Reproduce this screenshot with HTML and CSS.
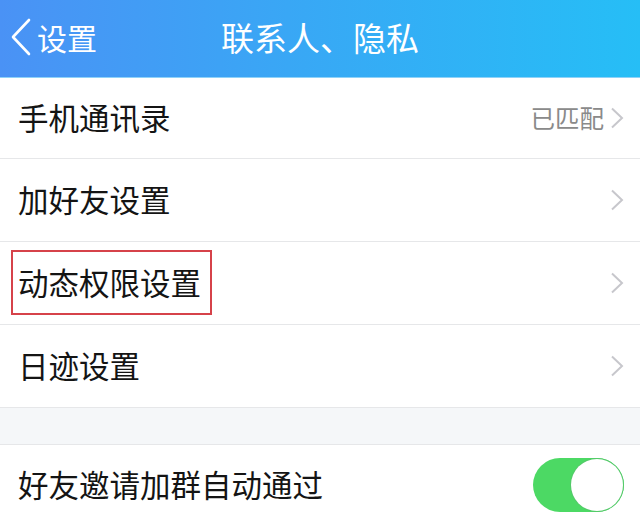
FILE: index.html
```html
<!DOCTYPE html>
<html lang="zh-CN">
<head>
<meta charset="utf-8">
<title>联系人、隐私</title>
<link rel="stylesheet" href="styles.css">
</head>
<body>
<div class="screen">
  <header class="nav">
    <div class="back">
      <svg class="back-icon" width="22" height="38" viewBox="0 0 22 38"><path d="M19 2 L3 19 L19 36" fill="none" stroke="#fff" stroke-width="2.6" stroke-linecap="round" stroke-linejoin="round"/></svg>
      <span class="back-text">设置</span>
    </div>
    <div class="title">联系人、隐私</div>
  </header>
  <ul class="group">
    <li class="row first">
      <span class="label">手机通讯录</span>
      <span class="right"><span class="value">已匹配</span><svg class="chev" width="14" height="22" viewBox="0 0 14 22"><path d="M2 1.5 L12 11 L2 20.5" fill="none" stroke="#c7c7cc" stroke-width="2"/></svg></span>
    </li>
    <li class="row">
      <span class="label">加好友设置</span>
      <span class="right"><svg class="chev" width="14" height="22" viewBox="0 0 14 22"><path d="M2 1.5 L12 11 L2 20.5" fill="none" stroke="#c7c7cc" stroke-width="2"/></svg></span>
    </li>
    <li class="row">
      <span class="label marked">动态权限设置</span>
      <span class="right"><svg class="chev" width="14" height="22" viewBox="0 0 14 22"><path d="M2 1.5 L12 11 L2 20.5" fill="none" stroke="#c7c7cc" stroke-width="2"/></svg></span>
    </li>
    <li class="row">
      <span class="label">日迹设置</span>
      <span class="right"><svg class="chev" width="14" height="22" viewBox="0 0 14 22"><path d="M2 1.5 L12 11 L2 20.5" fill="none" stroke="#c7c7cc" stroke-width="2"/></svg></span>
    </li>
  </ul>
  <div class="gap"></div>
  <ul class="group top">
    <li class="row last">
      <span class="label">好友邀请加群自动通过</span>
      <span class="switch on"><span class="knob"></span></span>
    </li>
  </ul>
</div>
</body>
</html>
```
FILE: styles.css
```css
* { box-sizing: border-box; }
html, body { margin: 0; padding: 0; }
body {
  width: 640px;
  height: 525px;
  overflow: hidden;
  background: #ffffff;
  font-family: "Noto Sans CJK SC", "Noto Sans", sans-serif;
}
.screen { width: 640px; }
.nav {
  height: 78px;
  background: linear-gradient(90deg, #4a92f5 0%, #39a7f5 45%, #26bef6 100%);
  display: flex;
  align-items: center;
  position: relative;
  color: #ffffff;
  border-bottom: 1px solid #8fd2f8;
}
.back {
  display: flex;
  align-items: center;
  padding-left: 10px;
  gap: 5px;
  margin-top: -4px;
}
.back-text { font-size: 30px; line-height: 1; }
.title {
  position: absolute;
  left: 0;
  right: 0;
  top: 21px;
  text-align: center;
  font-size: 33px;
  line-height: 1;
  pointer-events: none;
}
.group {
  list-style: none;
  margin: 0;
  padding: 0;
  background: #ffffff;
}
.group.top { border-top: 1px solid #e6e7e9; }
.row {
  height: 83px;
  display: flex;
  align-items: center;
  justify-content: space-between;
  padding: 0 16px 0 18px;
  border-bottom: 1px solid #e6e7e9;
}
.row.first { height: 81px; }
.row.last { border-bottom: none; height: 80px; }
.label {
  font-size: 30.5px;
  color: #141414;
  line-height: 1;
  position: relative;
  margin-top: -1px;
}
.marked::after {
  content: "";
  position: absolute;
  left: -7px;
  right: -11px;
  top: -17px;
  bottom: -17px;
  border: 2px solid #d6424a;
}
.right {
  display: flex;
  align-items: center;
  gap: 6px;
}
.value {
  font-size: 24.5px;
  color: #8a8a8a;
  line-height: 1;
}
.chev { display: block; }
.gap {
  height: 36px;
  background: #f5f7f9;
}
.switch {
  width: 91px;
  height: 54px;
  border-radius: 27px;
  background: #4cd964;
  position: relative;
  display: block;
}
.knob {
  position: absolute;
  right: 1px;
  top: 1px;
  width: 52px;
  height: 52px;
  border-radius: 50%;
  background: #ffffff;
  box-shadow: 0 0 0 1px #55c86a;
}
```
